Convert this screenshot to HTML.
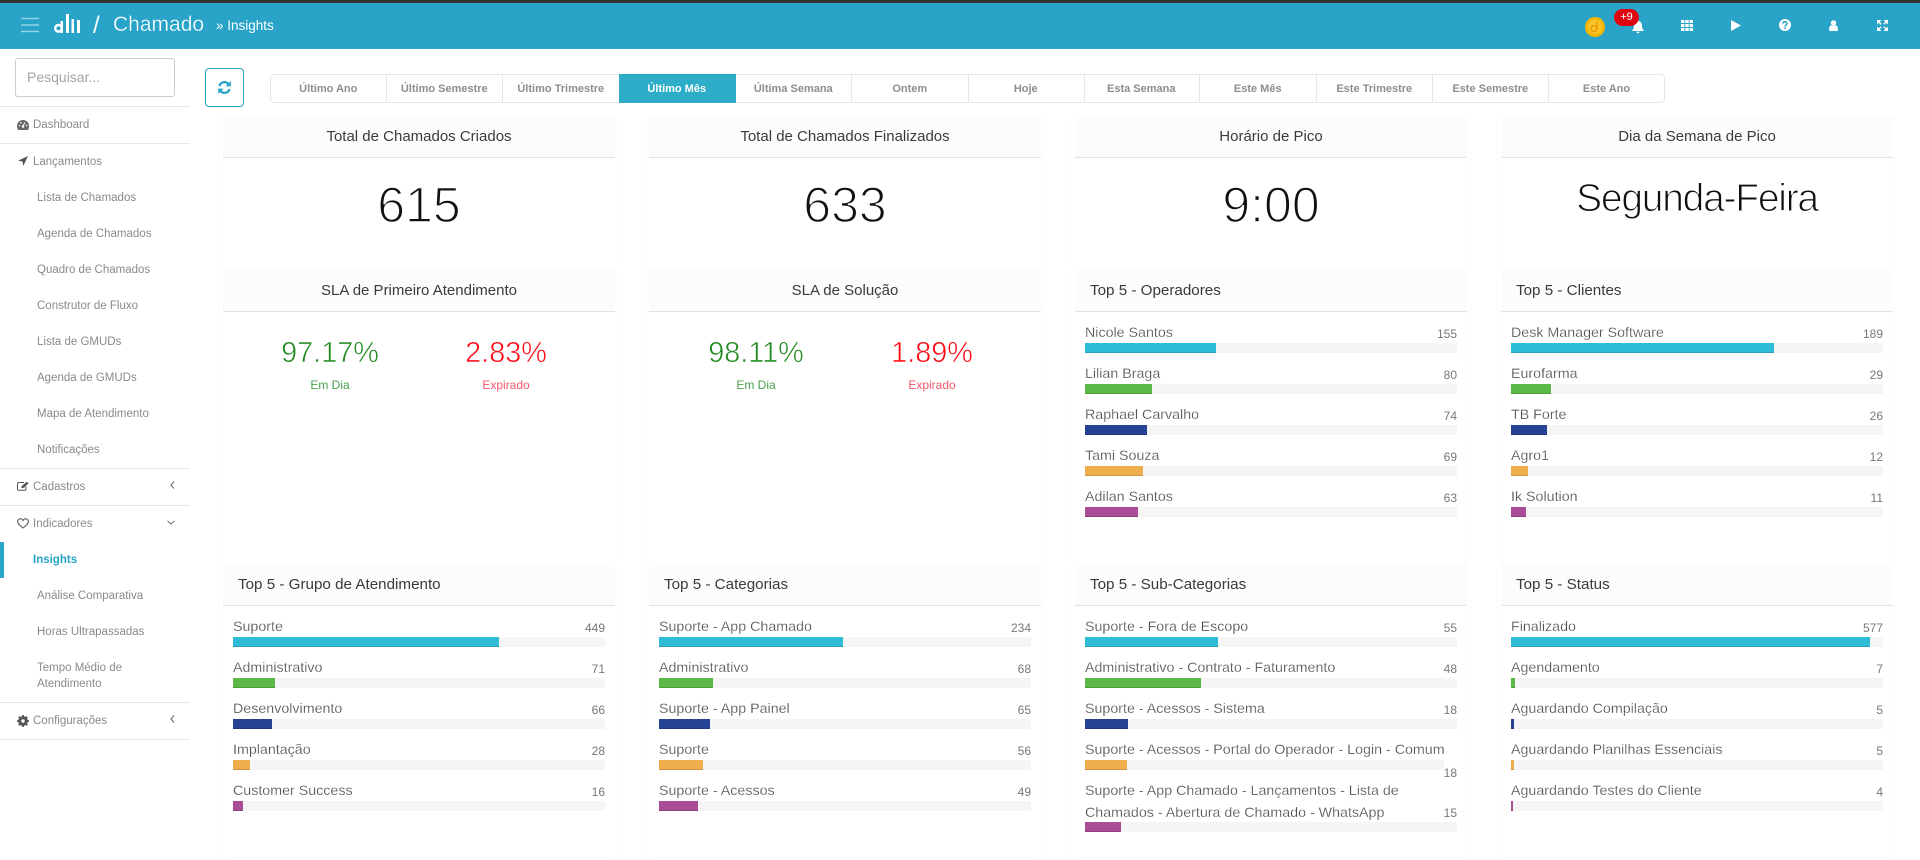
<!DOCTYPE html>
<html lang="pt-BR"><head><meta charset="utf-8"><title>Chamado - Insights</title>
<style>
*{box-sizing:border-box}
html,body{margin:0;padding:0;width:1920px;height:860px;overflow:hidden;background:#fff;font-family:"Liberation Sans",sans-serif;color:#333}
.abs,.hline,.m,.card,.outer,.ic{position:absolute}
#top{position:absolute;left:0;top:0;width:1920px;height:49px;background:#29a3c8;border-top:3px solid #333}
.hline{left:0;width:190px;height:1px;background:#e7e7e7}
.m{left:0;width:190px;font-size:11.5px;line-height:16px;color:#8a8a8a;white-space:nowrap;margin-top:1px}
.m.s{padding-left:37px}.m.p{padding-left:33px}
.ic{display:block;overflow:visible}
.btn{position:absolute;top:74px;height:29px;width:116.5px;border:1px solid #e7e7e7;border-left:0;text-align:center;font-size:11px;font-weight:bold;line-height:28px;color:#8d8d8d}
.outer{width:397px;border-radius:5px;box-shadow:0 0 2px rgba(0,0,0,.035)}
.card{width:392px}
.h{height:42px;background:#fcfcfc;border-bottom:1px solid #e2e2e2;font-size:15px;line-height:42px;color:#3a3a3a;text-align:center}
.h.lf{text-align:left;padding-left:15px;font-size:15.2px}
.big{position:absolute;left:0;width:392px;text-align:center;color:#111;-webkit-text-stroke:1.5px #fff}
.it{position:absolute;left:10px;width:372px;height:41px}
.l{position:absolute;left:0;top:0;font-size:14.25px;line-height:20px;color:#505050;white-space:nowrap;-webkit-text-stroke:.2px #fff}
.n{position:absolute;right:0;top:3px;font-size:12px;line-height:16px;color:#777}
.t{position:absolute;left:0;top:20px;width:372px;height:10px;background:#f5f5f5}
.f{height:10px;box-shadow:inset 0 -1px 0 rgba(0,0,0,.15)}
.c1{background:#2fbcd6}.c2{background:#5cb947}.c3{background:#264294}.c4{background:#f0ad4e}.c5{background:#a94d96}
.sl{position:absolute;width:190px;text-align:center}
.pc{font-size:28.8px;line-height:36px;-webkit-text-stroke:.6px #fff}
.lb{font-size:12px;line-height:16px}
</style></head><body>

<div id="top"></div>
<svg class="ic" style="left:21px;top:17px" width="18" height="16"><path d="M0 1.5H18M0 8H18M0 14.5H18" stroke="#8fd3e6" stroke-width="1.6"/></svg>
<svg class="ic" style="left:54px;top:14px" width="27" height="19"><g fill="#fff"><circle cx="4.500" cy="14.300" r="3.300" fill="none" stroke="#fff" stroke-width="2.400"/><rect x="6.500" y="7" width="2.500" height="12"/><rect x="12" y="0" width="3" height="19"/><rect x="17.500" y="5" width="2.500" height="14"/><rect x="23" y="6" width="3" height="13"/></g></svg>
<div class="abs" style="left:93px;top:12px;font-size:24px;line-height:28px;color:#fff">/</div>
<div class="abs" style="left:113px;top:11px;font-size:21px;line-height:28px;color:#fff;-webkit-text-stroke:.3px #29a3c8">Chamado</div>
<div class="abs" style="left:216px;top:17px;font-size:13.5px;line-height:18px;color:#fff">» Insights</div>

<svg class="ic" style="left:1584px;top:16px" width="22" height="22"><circle cx="11" cy="11" r="10" fill="#f7b500"/><circle cx="11" cy="11" r="7" fill="#fbc52b"/><circle cx="10" cy="12.500" r="3" fill="none" stroke="#e89a00" stroke-width="1.400"/><path d="M13 12.500V5.500" stroke="#e89a00" stroke-width="1.400"/></svg>
<svg class="ic" style="left:1632px;top:20px" width="12" height="13"><path d="M6 0a1.200 1.200 0 0 1 1 1.200C9 1.700 10 3.500 10 5.500c0 3 .8 4 2 5.200V11H0v-.3C1.200 9.500 2 8.500 2 5.500 2 3.500 3 1.700 5 1.200A1.200 1.200 0 0 1 6 0zM4.500 11.700h3a1.500 1.500 0 0 1-3 0z" fill="#fff"/></svg>
<div class="abs" style="left:1614px;top:9px;width:25px;height:17px;border-radius:8.5px;background:#df0410;color:#fff;font-size:11px;line-height:17px;text-align:center">+9</div>
<svg class="ic" style="left:1681px;top:20px" width="12" height="11" fill="#fff"><rect width="3.400" height="3"/><rect x="4.300" width="3.400" height="3"/><rect x="8.600" width="3.400" height="3"/><rect y="4" width="3.400" height="3"/><rect x="4.300" y="4" width="3.400" height="3"/><rect x="8.600" y="4" width="3.400" height="3"/><rect y="8" width="3.400" height="3"/><rect x="4.300" y="8" width="3.400" height="3"/><rect x="8.600" y="8" width="3.400" height="3"/></svg>
<svg class="ic" style="left:1731px;top:20px" width="10" height="11"><path d="M0 0L10 5.500 0 11z" fill="#fff"/></svg>
<svg class="ic" style="left:1779px;top:19px" width="12" height="12"><circle cx="6" cy="6" r="6" fill="#fff"/><path d="M3.900 4.600C4 3.400 4.900 2.800 6 2.800c1.200 0 2.100.7 2.100 1.700 0 1.500-2 1.400-2 3" fill="none" stroke="#29a3c8" stroke-width="1.500"/><rect x="5.200" y="8.300" width="1.700" height="1.500" fill="#29a3c8"/></svg>
<svg class="ic" style="left:1829px;top:20px" width="9" height="11"><circle cx="4.500" cy="3" r="2.700" fill="#fff"/><path d="M0 10c0-3 1-4.500 2.200-4.800 1.400.8 3.200.8 4.600 0C8 5.500 9 7 9 10a1 1 0 0 1-1 1H1a1 1 0 0 1-1-1z" fill="#fff"/></svg>
<svg class="ic" style="left:1877px;top:20px" width="11" height="11"><path d="M0 0H4.500L0 4.500zM11 0V4.500L6.500 0zM0 11V6.500L4.500 11zM11 11H6.500L11 6.500z" fill="#fff"/><path d="M2 2L4.200 4.200M9 2L6.800 4.200M2 9L4.200 6.800M9 9L6.800 6.800" stroke="#fff" stroke-width="1.400"/></svg>

<!-- Sidebar -->
<div class="abs" style="left:15px;top:58px;width:160px;height:39px;border:1px solid #ccc;border-radius:3px;font-size:14px;line-height:37px;padding-left:11px;color:#a5a5a5">Pesquisar...</div>
<div class="hline" style="top:106px"></div>
<svg class="ic" style="left:17px;top:120px" width="12" height="10"><path d="M6 0a6 6 0 0 1 6 6c0 1.500-.4 2.800-1 4H1C.4 8.800 0 7.500 0 6a6 6 0 0 1 6-6z" fill="#666"/><circle cx="6" cy="6.500" r="1.300" fill="#fff"/><path d="M6 6L8 2.500" stroke="#fff"/><circle cx="2.500" cy="5.500" r=".8" fill="#fff"/><circle cx="4" cy="2.800" r=".8" fill="#fff"/><circle cx="9.700" cy="5.500" r=".8" fill="#fff"/></svg>
<div class="m p" style="top:116px">Dashboard</div>
<div class="hline" style="top:143px"></div>
<svg class="ic" style="left:18px;top:156px" width="10" height="10"><path d="M10 0L5.300 10 4.500 5.500 0 4.700z" fill="#555"/></svg>
<div class="m p" style="top:153px">Lançamentos</div>
<div class="m s" style="top:189px">Lista de Chamados</div>
<div class="m s" style="top:225px">Agenda de Chamados</div>
<div class="m s" style="top:261px">Quadro de Chamados</div>
<div class="m s" style="top:297px">Construtor de Fluxo</div>
<div class="m s" style="top:333px">Lista de GMUDs</div>
<div class="m s" style="top:369px">Agenda de GMUDs</div>
<div class="m s" style="top:405px">Mapa de Atendimento</div>
<div class="m s" style="top:441px">Notificações</div>
<div class="hline" style="top:468px"></div>
<svg class="ic" style="left:17px;top:481px" width="13" height="10"><path d="M9 5.500V8a1.300 1.300 0 0 1-1.300 1.300H1.800A1.300 1.300 0 0 1 .5 8V2.800A1.300 1.300 0 0 1 1.800 1.500H7" fill="none" stroke="#555"/><path d="M4.500 5.200L9.800.8l1.700 1.500L7 6.700 4.300 7.300z" fill="#555"/></svg>
<div class="m p" style="top:478px">Cadastros</div>
<svg class="ic" style="left:170px;top:481px" width="5" height="8"><path d="M4 .5L1 4l3 3.500" fill="none" stroke="#666"/></svg>
<div class="hline" style="top:505px"></div>
<svg class="ic" style="left:17px;top:518px" width="12" height="11"><path d="M6 10C3 7.500.6 5.800.6 3.500A2.700 2.700 0 0 1 3.300.8C4.500.8 5.400 1.500 6 2.500 6.600 1.500 7.500.8 8.700.8a2.700 2.700 0 0 1 2.700 2.700C11.400 5.800 9 7.500 6 10z" fill="none" stroke="#555"/></svg>
<div class="m p" style="top:515px">Indicadores</div>
<svg class="ic" style="left:167px;top:520px" width="8" height="5"><path d="M.5 1L4 4l3.500-3" fill="none" stroke="#666"/></svg>
<div class="abs" style="left:0;top:542px;width:4px;height:36px;background:#29a3c8"></div>
<div class="m" style="top:551px;padding-left:33px;font-weight:bold;color:#29a3c8">Insights</div>
<div class="m s" style="top:587px">Análise Comparativa</div>
<div class="m s" style="top:623px">Horas Ultrapassadas</div>
<div class="m s" style="top:659px">Tempo Médio de<br>Atendimento</div>
<div class="hline" style="top:702px"></div>
<svg class="ic" style="left:17px;top:715px" width="12" height="12"><circle cx="6" cy="6" r="3.700" fill="none" stroke="#555" stroke-width="2.400"/><path d="M6 0V12M0 6H12M1.800 1.800L10.200 10.200M10.200 1.800L1.800 10.200" stroke="#555" stroke-width="1.800"/><circle cx="6" cy="6" r="1.700" fill="#fff"/></svg>
<div class="m p" style="top:712px">Configurações</div>
<svg class="ic" style="left:170px;top:715px" width="5" height="8"><path d="M4 .5L1 4l3 3.500" fill="none" stroke="#666"/></svg>
<div class="hline" style="top:739px"></div>

<!-- Refresh -->
<div class="abs" style="left:205px;top:68px;width:39px;height:39px;border:1px solid #29a3c8;border-radius:4px"></div>
<svg class="ic" style="left:218px;top:81px" width="13" height="13"><path d="M1.400 5A5.300 5.300 0 0 1 10.500 3" fill="none" stroke="#29a3c8" stroke-width="2.300"/><path d="M12.800 0V5.400H7.400z" fill="#29a3c8"/><path d="M11.600 8A5.300 5.300 0 0 1 2.500 10" fill="none" stroke="#29a3c8" stroke-width="2.300"/><path d="M.2 13V7.600H5.600z" fill="#29a3c8"/></svg>

<!-- Period buttons -->
<div class="btn" style="left:270px;border-left:1px solid #e7e7e7;border-radius:4px 0 0 4px">Último Ano</div>
<div class="btn" style="left:386.5px">Último Semestre</div>
<div class="btn" style="left:503px">Último Trimestre</div>
<div class="btn" style="left:619px;background:#2eadc9;border-color:#2eadc9;color:#fff">Último Mês</div>
<div class="btn" style="left:735.5px">Última Semana</div>
<div class="btn" style="left:852px">Ontem</div>
<div class="btn" style="left:968px">Hoje</div>
<div class="btn" style="left:1083.5px">Esta Semana</div>
<div class="btn" style="left:1200px">Este Mês</div>
<div class="btn" style="left:1316.5px">Este Trimestre</div>
<div class="btn" style="left:1432.5px">Este Semestre</div>
<div class="btn" style="left:1549px;width:116px;border-radius:0 4px 4px 0">Este Ano</div>

<!-- Card shells -->
<div class="outer" style="left:220px;top:116px;height:152px"></div><div class="outer" style="left:646px;top:116px;height:152px"></div><div class="outer" style="left:1072px;top:116px;height:152px"></div><div class="outer" style="left:1498px;top:116px;height:152px"></div>
<div class="outer" style="left:220px;top:270px;height:292px"></div><div class="outer" style="left:646px;top:270px;height:292px"></div><div class="outer" style="left:1072px;top:270px;height:292px"></div><div class="outer" style="left:1498px;top:270px;height:292px"></div>
<div class="outer" style="left:220px;top:564px;height:293px"></div><div class="outer" style="left:646px;top:564px;height:293px"></div><div class="outer" style="left:1072px;top:564px;height:293px"></div><div class="outer" style="left:1498px;top:564px;height:293px"></div>

<!-- Row 1 -->
<div class="card" style="left:223px;top:116px"><div class="h">Total de Chamados Criados</div><div class="big" style="top:59px;font-size:50px;line-height:60px">615</div></div>
<div class="card" style="left:649px;top:116px"><div class="h">Total de Chamados Finalizados</div><div class="big" style="top:59px;font-size:50px;line-height:60px">633</div></div>
<div class="card" style="left:1075px;top:116px"><div class="h">Horário de Pico</div><div class="big" style="top:59px;font-size:50px;line-height:60px">9:00</div></div>
<div class="card" style="left:1501px;top:116px"><div class="h">Dia da Semana de Pico</div><div class="big" style="top:58px;font-size:39px;line-height:50px;letter-spacing:-1.25px;-webkit-text-stroke:1.1px #fff">Segunda-Feira</div></div>

<!-- Row 2 -->
<div class="card" style="left:223px;top:270px"><div class="h">SLA de Primeiro Atendimento</div>
<div class="sl" style="left:12px;top:65px;color:#228b22"><div class="pc">97.17%</div><div class="lb" style="margin-top:6px;color:#4aa04a">Em Dia</div></div>
<div class="sl" style="left:188px;top:65px;color:#ff0a14"><div class="pc">2.83%</div><div class="lb" style="margin-top:6px;color:#f5566a">Expirado</div></div></div>
<div class="card" style="left:649px;top:270px"><div class="h">SLA de Solução</div>
<div class="sl" style="left:12px;top:65px;color:#228b22"><div class="pc">98.11%</div><div class="lb" style="margin-top:6px;color:#4aa04a">Em Dia</div></div>
<div class="sl" style="left:188px;top:65px;color:#ff0a14"><div class="pc">1.89%</div><div class="lb" style="margin-top:6px;color:#f5566a">Expirado</div></div></div>

<div class="card" style="left:1075px;top:270px"><div class="h lf">Top 5 - Operadores</div>
<div class="it" style="top:53px"><div class="l">Nicole Santos</div><div class="n">155</div><div class="t"><div class="f c1" style="width:131px"></div></div></div>
<div class="it" style="top:94px"><div class="l">Lilian Braga</div><div class="n">80</div><div class="t"><div class="f c2" style="width:67px"></div></div></div>
<div class="it" style="top:135px"><div class="l">Raphael Carvalho</div><div class="n">74</div><div class="t"><div class="f c3" style="width:62px"></div></div></div>
<div class="it" style="top:176px"><div class="l">Tami Souza</div><div class="n">69</div><div class="t"><div class="f c4" style="width:58px"></div></div></div>
<div class="it" style="top:217px"><div class="l">Adilan Santos</div><div class="n">63</div><div class="t"><div class="f c5" style="width:53px"></div></div></div></div>

<div class="card" style="left:1501px;top:270px"><div class="h lf">Top 5 - Clientes</div>
<div class="it" style="top:53px"><div class="l">Desk Manager Software</div><div class="n">189</div><div class="t"><div class="f c1" style="width:263px"></div></div></div>
<div class="it" style="top:94px"><div class="l">Eurofarma</div><div class="n">29</div><div class="t"><div class="f c2" style="width:40px"></div></div></div>
<div class="it" style="top:135px"><div class="l">TB Forte</div><div class="n">26</div><div class="t"><div class="f c3" style="width:36px"></div></div></div>
<div class="it" style="top:176px"><div class="l">Agro1</div><div class="n">12</div><div class="t"><div class="f c4" style="width:17px"></div></div></div>
<div class="it" style="top:217px"><div class="l">Ik Solution</div><div class="n">11</div><div class="t"><div class="f c5" style="width:15px"></div></div></div></div>

<!-- Row 3 -->
<div class="card" style="left:223px;top:564px"><div class="h lf">Top 5 - Grupo de Atendimento</div>
<div class="it" style="top:53px"><div class="l">Suporte</div><div class="n">449</div><div class="t"><div class="f c1" style="width:266px"></div></div></div>
<div class="it" style="top:94px"><div class="l">Administrativo</div><div class="n">71</div><div class="t"><div class="f c2" style="width:42px"></div></div></div>
<div class="it" style="top:135px"><div class="l">Desenvolvimento</div><div class="n">66</div><div class="t"><div class="f c3" style="width:39px"></div></div></div>
<div class="it" style="top:176px"><div class="l">Implantação</div><div class="n">28</div><div class="t"><div class="f c4" style="width:17px"></div></div></div>
<div class="it" style="top:217px"><div class="l">Customer Success</div><div class="n">16</div><div class="t"><div class="f c5" style="width:10px"></div></div></div></div>

<div class="card" style="left:649px;top:564px"><div class="h lf">Top 5 - Categorias</div>
<div class="it" style="top:53px"><div class="l">Suporte - App Chamado</div><div class="n">234</div><div class="t"><div class="f c1" style="width:184px"></div></div></div>
<div class="it" style="top:94px"><div class="l">Administrativo</div><div class="n">68</div><div class="t"><div class="f c2" style="width:54px"></div></div></div>
<div class="it" style="top:135px"><div class="l">Suporte - App Painel</div><div class="n">65</div><div class="t"><div class="f c3" style="width:51px"></div></div></div>
<div class="it" style="top:176px"><div class="l">Suporte</div><div class="n">56</div><div class="t"><div class="f c4" style="width:44px"></div></div></div>
<div class="it" style="top:217px"><div class="l">Suporte - Acessos</div><div class="n">49</div><div class="t"><div class="f c5" style="width:39px"></div></div></div></div>

<div class="card" style="left:1075px;top:564px"><div class="h lf">Top 5 - Sub-Categorias</div>
<div class="it" style="top:53px"><div class="l">Suporte - Fora de Escopo</div><div class="n">55</div><div class="t"><div class="f c1" style="width:133px"></div></div></div>
<div class="it" style="top:94px"><div class="l">Administrativo - Contrato - Faturamento</div><div class="n">48</div><div class="t"><div class="f c2" style="width:116px"></div></div></div>
<div class="it" style="top:135px"><div class="l">Suporte - Acessos - Sistema</div><div class="n">18</div><div class="t"><div class="f c3" style="width:43px"></div></div></div>
<div class="it" style="top:176px"><div class="l">Suporte - Acessos - Portal do Operador - Login - Comum</div><div class="n" style="top:25px">18</div><div class="t" style="width:359px"><div class="f c4" style="width:42px"></div></div></div>
<div class="it" style="top:217px"><div class="l">Suporte - App Chamado - Lançamentos - Lista de</div><div class="l" style="top:22px">Chamados - Abertura de Chamado - WhatsApp</div><div class="n" style="top:24px">15</div><div class="t" style="top:41px"><div class="f c5" style="width:36px"></div></div></div></div>

<div class="card" style="left:1501px;top:564px"><div class="h lf">Top 5 - Status</div>
<div class="it" style="top:53px"><div class="l">Finalizado</div><div class="n">577</div><div class="t"><div class="f c1" style="width:359px"></div></div></div>
<div class="it" style="top:94px"><div class="l">Agendamento</div><div class="n">7</div><div class="t"><div class="f c2" style="width:4px"></div></div></div>
<div class="it" style="top:135px"><div class="l">Aguardando Compilação</div><div class="n">5</div><div class="t"><div class="f c3" style="width:3px"></div></div></div>
<div class="it" style="top:176px"><div class="l">Aguardando Planilhas Essenciais</div><div class="n">5</div><div class="t"><div class="f c4" style="width:3px"></div></div></div>
<div class="it" style="top:217px"><div class="l">Aguardando Testes do Cliente</div><div class="n">4</div><div class="t"><div class="f c5" style="width:2px"></div></div></div></div>

</body></html>
